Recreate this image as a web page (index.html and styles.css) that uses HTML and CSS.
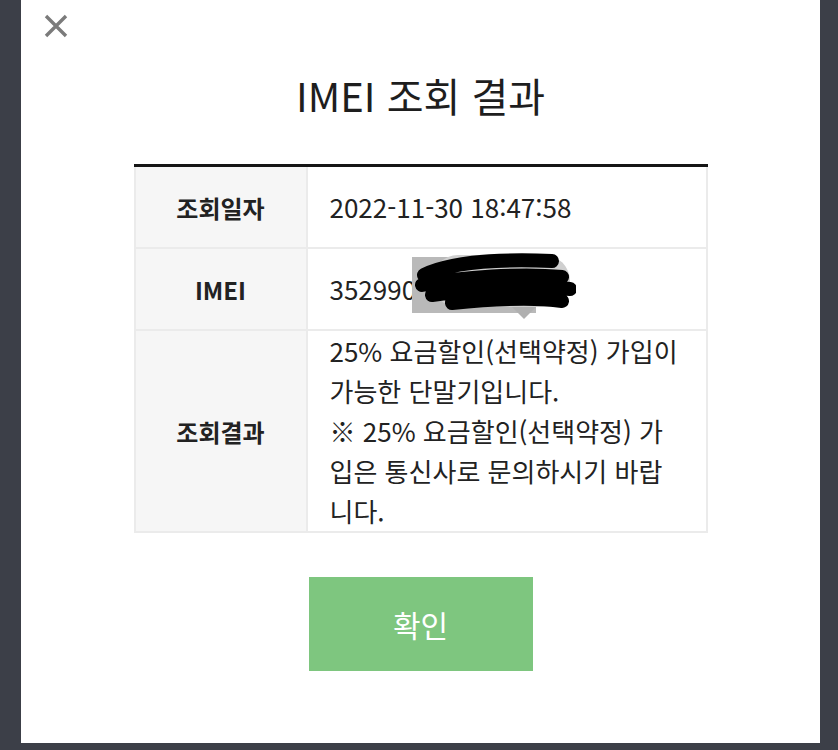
FILE: index.html
```html
<!DOCTYPE html>
<html lang="ko">
<head>
    <meta charset="UTF-8">
    <meta name="viewport" content="width=device-width, initial-scale=1.0">
    <title>IMEI 조회 결과</title>
    <link rel="stylesheet" href="styles.css">
</head>
<body>
    <div class="modal">
        <button class="close" aria-label="닫기">
            <svg width="26" height="24" viewBox="0 0 26 24">
                <path d="M3 2 L23 22 M23 2 L3 22" stroke="#7b7b7b" stroke-width="3.4"/>
            </svg>
        </button>

        <h1 class="title">IMEI 조회 결과</h1>

        <table class="result">
            <tr>
                <th>조회일자</th>
                <td>2022-11-30 18:47:58</td>
            </tr>
            <tr>
                <th>IMEI</th>
                <td>
                    <span class="imei">352990-<svg class="redact" width="164" height="68" viewBox="0 0 164 68">
                        <rect x="0" y="6" width="124" height="56" fill="#b9b9b9"/>
                        <rect x="20" y="4" width="138" height="52" rx="26" fill="#cfcfcf"/>
                        <path d="M12 24 C40 10 90 8 140 10 M10 34 C50 26 110 22 150 26 M20 44 C60 38 120 34 158 38 M40 52 C80 48 120 46 150 50" stroke="#000" stroke-width="14" stroke-linecap="round" fill="none"/>
                        <path d="M100 56 L112 68 L124 56 Z" fill="#b0b0b0"/>
                    </svg></span>
                </td>
            </tr>
            <tr>
                <th>조회결과</th>
                <td class="long">25% 요금할인(선택약정) 가입이 가능한 단말기입니다.<br>※ 25% 요금할인(선택약정) 가입은 통신사로 문의하시기 바랍니다.</td>
            </tr>
        </table>

        <div class="actions">
            <button class="confirm">확인</button>
        </div>
    </div>
</body>
</html>
```

FILE: styles.css
```css
body {
    margin: 0;
    background-color: #3c3f48;
    font-family: "Noto Sans CJK KR", "Noto Sans", sans-serif;
    color: #222;
}

.modal {
    position: relative;
    margin: 0 18px 0 21px;
    height: 743px;
    background-color: #fff;
    box-sizing: border-box;
    padding-top: 64px;
}

.close {
    position: absolute;
    top: 14px;
    left: 22px;
    padding: 0;
    border: none;
    background: none;
    cursor: pointer;
}

.title {
    margin: 0 0 38px;
    text-align: center;
    font-size: 40px;
    font-weight: 400;
    line-height: 62px;
    color: #1e1e1e;
}

.result {
    width: 574px;
    margin: 0 auto;
    border-collapse: collapse;
    border-top: 3px solid #151515;
    font-size: 26px;
}

.result th,
.result td {
    border: 2px solid #ebebeb;
    height: 80px;
    padding: 0;
}

.result th {
    width: 170px;
    background-color: #f6f6f6;
    font-size: 24px;
    font-weight: 700;
    color: #222;
}

.result td {
    padding-left: 22px;
    padding-right: 22px;
    color: #222;
    line-height: 40px;
}

.result tr:first-child th,
.result tr:first-child td {
    border-top: none;
}

.result td.long {
    height: 198px;
}

.imei {
    position: relative;
}

.redact {
    position: absolute;
    left: 82px;
    top: -19px;
}

.actions {
    display: flex;
    justify-content: center;
    margin-top: 44px;
}

.confirm {
    width: 224px;
    height: 94px;
    border: none;
    background-color: #7ec67f;
    color: #fff;
    font-family: inherit;
    font-size: 30px;
    cursor: pointer;
}
```
